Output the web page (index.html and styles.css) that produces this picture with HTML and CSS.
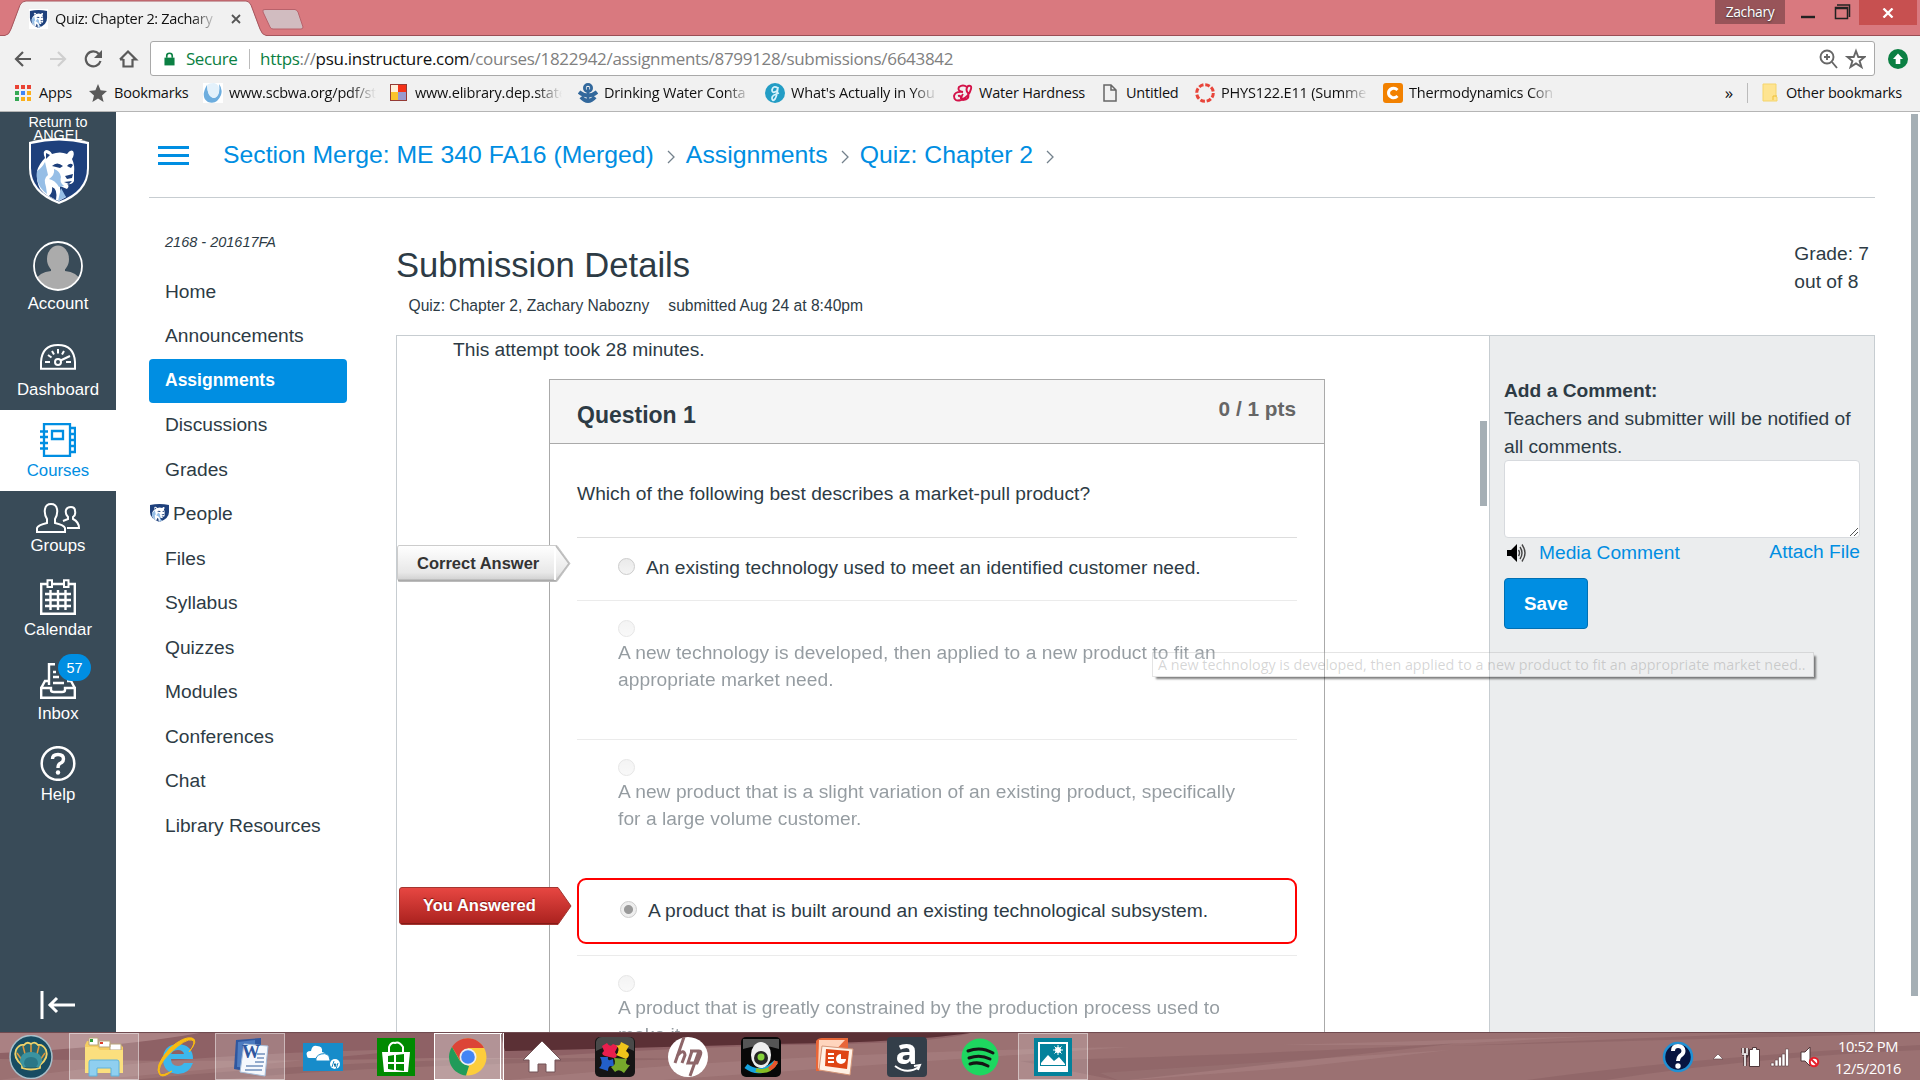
FILE: index.html
```html
<!DOCTYPE html>
<html lang="en">
<head>
<meta charset="utf-8">
<title>Quiz: Chapter 2: Zachary Nabozny</title>
<link rel="stylesheet" href="styles.css">
</head>
<body>
<svg class="defs" width="0" height="0">
  <defs>
    <symbol id="shield" viewBox="0 0 62 68" preserveAspectRatio="none">
      <path d="M1 5Q31-3 61 5V31Q61 56 31 67Q1 56 1 31Z" fill="#fff"/>
      <path d="M3 7Q31 0 59 7V31Q59 54 31 64.500Q3 54 3 31Z" fill="#1e407c"/>
      <path d="M17 21Q14 14 18 13Q22 13 24 17Q32 14 39 17Q42 12 45 14Q47 17 44 22Q47 28 46 36L46 44Q44 48 39 47Q42 49 39 52L32 49Q31 56 38 60L31 64Q18 60 12 52Q8 44 9 34Q11 27 17 21Z" fill="#fff"/>
      <path d="M9 34Q14 31 17 25L20 38Q15 41 18 50L19 57Q7 48 9 34ZM26 32Q32 34 33 40Q31 45 36 49L31 50Q27 43 21 42Q27 38 26 32ZM33 51L38 60L30 64Z" fill="#96bee6"/>
      <path d="M18 16L22 18L18 22ZM24 29Q29 24 35 29L32 31ZM39 29Q42 25 45 28L43 31ZM37 39L45 37L44 41L39 42ZM36 45L44 44L41 47ZM24 50Q30 52 28 63L21 59Q25 55 24 50Z" fill="#1e407c"/>
    </symbol>
  </defs>
</svg>
<header class="browser">
  <div class="titlebar">
    <svg class="tabs" width="310" height="36" viewBox="0 0 310 36">
      <path d="M0 36V35H7C10 34 11 30 20 5Q22 1 26 1H246Q249 1 251 5C260 30 261 34 265 35H310V36Z" fill="#f1f1f1"/>
      <path d="M0 35.500H5Q9 35 11 29L20 5Q22 1 26 1H246Q249 1 251 5L260 29Q262 35 266 35.500H310" fill="none" stroke="#a6565e"/>
      <path d="M265 9.500H295Q297 10 298 12L303 27Q303 29 301 29H273Q271 29 270 27L263 12Q262 9 265 9.500Z" fill="#d1bcc0" stroke="#b8626b"/>
    </svg>
    <div class="tab">
      <svg class="tab-icon" width="19" height="20"><rect width="19" height="20" fill="#fff"/><use href="#shield" x="0" y="0" width="19" height="20"/></svg>
      <span class="tab-title fade">Quiz: Chapter 2: Zachary</span>
      <svg class="tab-close" width="10" height="10"><path d="M1 1L9 9M9 1L1 9" stroke="#555" stroke-width="1.800"/></svg>
    </div>
    <div class="window-controls">
      <span class="profile">Zachary</span>
      <svg width="74" height="26" viewBox="0 0 74 26"><path d="M16 17H30" stroke="#222" stroke-width="2.400"/><path d="M50.500 7.500H62.500V18.500H50.500ZM50 8.500H63M52 5H64.500V17" fill="none" stroke="#222" stroke-width="1.500"/></svg>
      <span class="close"><svg width="12" height="10"><path d="M1.500 .5L10.500 9.500M10.500 .5L1.500 9.500" stroke="#fff" stroke-width="2.300"/></svg></span>
    </div>
  </div>
  <div class="toolbar">
    <svg class="tool-icons" width="150" height="36" viewBox="0 0 150 36" fill="none" stroke="#5a5a5a" stroke-width="2.200">
      <path d="M31 18H16M23 11L16 18L23 25"/>
      <path d="M50 18H65M58 11L65 18L58 25" stroke="#cfcfcf"/>
      <path d="M99 13A7.500 7.500 0 1 0 100.500 20"/><path d="M102 9V17H94Z" fill="#5a5a5a" stroke="none"/>
      <path d="M123.500 18V25.500H132.500V18M120 18.500L128 10.500L136 18.500H132.500M123.500 18.500H120"/>
    </svg>
    <div class="address">
      <svg width="11" height="14" viewBox="0 0 12 15"><path d="M.5 6H11.500V14.500H.5Z" fill="#0b8043"/><path d="M3 6V4Q3 1.200 6 1.200T9 4V6" fill="none" stroke="#0b8043" stroke-width="1.800"/></svg>
      <span class="secure">Secure</span><span class="sep"></span>
      <span class="url"><span class="green">https</span>://<b>psu.instructure.com</b>/courses/1822942/assignments/8799128/submissions/6643842</span>
      <svg class="address-actions" width="47" height="22" viewBox="0 0 47 22" fill="none" stroke="#666" stroke-width="1.900"><circle cx="8" cy="9" r="6.500"/><path d="M13 14L18 20M5 9H11M8 6V12"/><path d="M37 3L39.300 9H45.500L40.600 13L42.500 19L37 15.500L31.500 19L33.400 13L28.500 9H34.700Z"/></svg>
    </div>
    <svg class="update" width="20" height="20"><circle cx="10" cy="10" r="10" fill="#0b8043"/><path d="M10 4.500L15 10H12.300V15H7.700V10H5Z" fill="#fff"/></svg>
  </div>
  <div class="bookmarks">
    <div class="bm"><i class="apps-grid"></i><span>Apps</span></div>
    <div class="bm"><svg width="20" height="20" viewBox="0 0 20 20"><path d="M10 1L12.600 7.300L19 8L14 12.500L15.600 19L10 15.500L4.400 19L6 12.500L1 8L7.400 7.300Z" fill="#5a5a5a"/></svg><span>Bookmarks</span></div>
    <div class="bm"><svg width="20" height="20"><rect width="20" height="20" fill="#fff"/><path d="M4 2Q-3 14 5 19Q14 22 18 12Q20 6 16 1Q18 12 11 15Q5 15 4 2Z" fill="#6dadde"/><path d="M4 2Q6 0 11 0Q17 1 16 9Q15 15 10 15Q4 13 4 2Z" fill="#e3f1fb"/></svg><span class="fade">www.scbwa.org/pdf/st</span></div>
    <div class="bm"><svg width="20" height="20"><rect x="1" y="1" width="17" height="17" fill="#943b35"/><rect x="2" y="2" width="7" height="7" fill="#fff0db"/><rect x="9" y="2" width="8" height="7" fill="#f53218"/><rect x="2" y="9" width="7" height="8" fill="#fbc42b"/><rect x="9" y="9" width="8" height="8" fill="#9999ce"/></svg><span class="fade">www.elibrary.dep.state</span></div>
    <div class="bm"><svg width="20" height="20" fill="none" stroke="#32689c"><circle cx="10" cy="5" r="3.600" stroke-width="2.800"/><path d="M1 9Q10 16 19 9M3 14Q10 22 17 14" stroke-width="4"/><path d="M10 4V19" stroke-width="2.500"/></svg><span class="fade">Drinking Water Conta</span></div>
    <div class="bm"><svg width="20" height="20"><circle cx="10" cy="10" r="10" fill="#239dc5"/><path d="M13 5Q8 2 7 7Q7 11 12 8L13 4Q12 13 10 16Q7 19 7 15Q7 12 14 10" fill="none" stroke="#d6f2fb" stroke-width="1.800"/></svg><span class="fade">What's Actually in You</span></div>
    <div class="bm"><svg width="20" height="20" fill="none" stroke="#d31349" stroke-width="1.900"><path d="M14 4Q10 1 6 4Q4 8 10 9Q2 8 1 13Q1 19 8 17Q16 14 18 6Q19 2 15 3Q12 7 15 10Q17 17 10 17Q7 15 10 11M5 13Q8 12 8 16"/></svg><span>Water Hardness</span></div>
    <div class="bm"><svg width="20" height="20" fill="none" stroke="#666" stroke-width="1.500"><path d="M4 2H11L16 7V18H4ZM11 2V7H16"/></svg><span>Untitled</span></div>
    <div class="bm"><svg width="20" height="20"><circle cx="10" cy="10" r="8.300" fill="none" stroke="#e8453a" stroke-width="3" stroke-dasharray="4.700 1.820"/></svg><span class="fade">PHYS122.E11 (Summe</span></div>
    <div class="bm"><svg width="20" height="20"><rect width="20" height="20" rx="3" fill="#f28100"/><path d="M14.500 7Q12 4.500 9 5.500Q5.500 7 5.500 10T9 14.500Q12 15.500 14.500 13" fill="none" stroke="#fff" stroke-width="3"/></svg><span class="fade">Thermodynamics Con</span></div>
    <div class="bm-end"><span class="more">»</span><span class="sep"></span><svg width="16" height="19"><path d="M1 1H14V14H15V18H1Z" fill="#fee491" stroke="#f5d56d"/><path d="M11 17V13H15" fill="none" stroke="#eebf38"/></svg><span>Other bookmarks</span></div>
  </div>
</header>

<div class="page">
  <nav class="global-nav">
    <div class="logo"><span>Return to<br>ANGEL</span><svg width="62" height="68"><use href="#shield" width="62" height="68"/></svg></div>
    <a class="nav-account"><svg width="50" height="50"><defs><clipPath id="av"><circle cx="25" cy="25" r="23.500"/></clipPath></defs><g clip-path="url(#av)" fill="#ababab"><ellipse cx="25" cy="18" rx="11" ry="13.500"/><path d="M18 27H32V30Q44 31 48 40V50H2V40Q6 31 18 30Z"/></g><circle cx="25" cy="25" r="24" fill="none" stroke="#fff" stroke-width="1.800"/></svg><span>Account</span></a>
    <a class="nav-dashboard"><svg width="36" height="26" fill="none" stroke="#fff" stroke-width="2"><path d="M1 24.800V18Q2 1 18 1T35 18V24.800Z"/><circle cx="18" cy="18" r="3"/><path d="M20.500 16.500L30 12M5 18H10M26 18H31M8 11L11.500 13.500M12 7L14 10.500M18 5V9.500M24 7L22 10.500"/></svg><span>Dashboard</span></a>
    <a class="nav-courses"><svg width="36" height="34" fill="none" stroke="#008ee2" stroke-width="2.300"><path d="M4 1.200H30V32.800H4ZM12 8H23V16H12ZM30 5H35V29H30M30 11H35M30 17H35M30 23H35"/><path d="M0 8.500H8M0 14H8M0 20H8M0 25.500H8"/></svg><span>Courses</span></a>
    <a class="nav-groups"><svg width="44" height="30" fill="none" stroke="#fff" stroke-width="2"><path d="M1 29V25Q2 22 11 20V16Q8 11 9 6Q10 1 15 1T21 6Q22 11 19 16V20Q28 22 29 25V29Z"/><path d="M27 18L32 16V14Q29 11 30 7Q31 4 35 4T39 8Q40 12 37 14V16Q43 19 43 25H31"/></svg><span>Groups</span></a>
    <a class="nav-calendar"><svg width="36" height="36" fill="none" stroke="#fff"><path d="M7 5H1.200V34.800H34.800V5H29M13 5H23" stroke-width="2.400"/><path d="M7.500 1.200H12V8H7.500ZM24 1.200H28.500V8H24Z" stroke-width="2"/><path d="M10.500 11V31M18 11V31M25.500 11V31M5 15H31M5 21H31M5 27H31" stroke-width="2.400"/></svg><span>Calendar</span></a>
    <a class="nav-inbox"><svg width="36" height="36" fill="none" stroke="#fff" stroke-width="2.400"><path d="M1.200 25H11V27Q11 29 14 29H22Q25 29 25 27V25H34.800V34.800H1.200ZM1.200 25L5 18H9M34.800 25L31 18H27M9 22V1.200H15M13 9H16M13 14H19M13 20H24"/></svg><b class="badge">57</b><span>Inbox</span></a>
    <a class="nav-help"><svg width="36" height="35" fill="none" stroke="#fff"><circle cx="18" cy="17.500" r="16.300" stroke-width="2.500"/><path d="M12.500 13Q12.500 8.500 18 8.500T23.500 13Q23.500 16 20 17.500Q18 18.500 18 22" stroke-width="3.400"/><circle cx="18" cy="26.500" r="2.200" fill="#fff" stroke="none"/></svg><span>Help</span></a>
    <svg class="collapse" width="36" height="28" fill="none" stroke="#fff" stroke-width="3"><path d="M2 0V28M9 14H35M17 7L10 14L17 21"/></svg>
  </nav>

  <div class="content">
    <div class="crumbs">
      <i class="burger"></i>
      <a>Section Merge: ME 340 FA16 (Merged)</a><svg class="chev" width="9" height="14"><path d="M1 1L7 7L1 13"/></svg>
      <a>Assignments</a><svg class="chev" width="9" height="14"><path d="M1 1L7 7L1 13"/></svg>
      <a>Quiz: Chapter 2</a><svg class="chev" width="9" height="14"><path d="M1 1L7 7L1 13"/></svg>
    </div>
    <div class="columns">
      <nav class="course-nav">
        <em>2168 - 201617FA</em>
        <a>Home</a><a>Announcements</a><a class="active">Assignments</a><a>Discussions</a><a>Grades</a>
        <a class="people"><svg width="21" height="20"><use href="#shield" width="21" height="20"/></svg>People</a>
        <a>Files</a><a>Syllabus</a><a>Quizzes</a><a>Modules</a><a>Conferences</a><a>Chat</a><a>Library Resources</a>
      </nav>
      <main>
        <div class="heading">
          <div><h1>Submission Details</h1><p><span>Quiz: Chapter 2, Zachary Nabozny</span><span class="when">submitted Aug 24 at 8:40pm</span></p></div>
          <div class="grade">Grade: 7<br>out of 8</div>
        </div>
        <div class="frame">
          <div class="attempt">
            <p class="took">This attempt took 28 minutes.</p>
            <i class="thumb"></i>
            <section class="question">
              <header><h2>Question 1</h2><span>0 / 1 pts</span></header>
              <p class="prompt">Which of the following best describes a market-pull product?</p>
              <div class="answer short"><i class="radio"></i><span>An existing technology used to meet an identified customer need.</span>
                <div class="flag right"><svg width="174" height="37"><defs><linearGradient id="g1" x2="0" y2="1"><stop stop-color="#fff"/><stop offset=".75" stop-color="#e8e8e8"/><stop offset="1" stop-color="#ccc"/></linearGradient></defs><path d="M2 .5H160L173 18.500L160 36.500H3Q.5 36 .5 33V3Q.5 .5 2 .5Z" fill="url(#g1)" stroke="#ccc"/><path d="M1 35.500H159" stroke="#aaa" stroke-width="2"/><path d="M158 1V35" stroke="#fff" stroke-width="2"/><path d="M159 1L172 18.500L159 36" fill="none" stroke="#bbb" stroke-width="1.500"/></svg><b>Correct Answer</b></div>
              </div>
              <div class="answer long faded"><i class="radio"></i><p>A new technology is developed, then applied to a new product to fit an<br>appropriate market need.</p></div>
              <div class="answer long faded"><i class="radio"></i><p>A new product that is a slight variation of an existing product, specifically<br>for a large volume customer.</p></div>
              <div class="answer chosen"><i class="radio on"></i><span>A product that is built around an existing technological subsystem.</span>
                <div class="flag wrong"><svg width="173" height="38"><defs><linearGradient id="g2" x2="0" y2="1"><stop stop-color="#e84742"/><stop offset="1" stop-color="#a9211e"/></linearGradient></defs><path d="M3 .5H159L172 19L159 37.500H3Q.5 37 .5 35V3Q.5 .5 3 .5Z" fill="url(#g2)" stroke="#a33631"/><path d="M2 36.500H159" stroke="#861b17"/></svg><b>You Answered</b></div>
              </div>
              <div class="answer long last faded"><i class="radio"></i><p>A product that is greatly constrained by the production process used to<br>make it.</p></div>
            </section>
          </div>
          <aside>
            <b>Add a Comment:</b>
            <p>Teachers and submitter will be notified of<br>all comments.</p>
            <div class="textarea"><svg width="10" height="10"><path d="M1 9L9 1M5 9L9 5" stroke="#555"/></svg></div>
            <div class="media"><svg width="22" height="20" fill="none" stroke="#444"><path d="M1 7H5L11 1V19L5 13H1Z" fill="#000" stroke="none"/><path d="M12.500 7Q14.500 10 12.500 13M14 4Q18 10 14 16M16 1.500Q22 10 16 18.500" stroke-width="1.400"/></svg><a>Media Comment</a><a class="attach">Attach File</a></div>
            <div class="save">Save</div>
          </aside>
        </div>
      </main>
    </div>
  </div>
  <i class="page-thumb"></i>
  <div class="tooltip">A new technology is developed, then applied to a new product to fit an appropriate market need..</div>
</div>

<footer class="taskbar">
  <svg class="wood" width="1920" height="48" viewBox="0 0 1920 48" preserveAspectRatio="none"><path d="M0 0H970Q940 10 790 12Q660 15 520 25H430Q250 30 0 26Z" fill="#8e6165"/><path d="M500 0H970Q900 10 770 11Q640 15 505 18Z" fill="#5b3035"/><path d="M0 0H200Q120 14 0 20Z" fill="#b78f90" opacity=".7"/><path d="M0 47Q180 20 420 16Q300 28 80 48ZM500 48Q760 20 1130 14Q900 30 650 48ZM1100 40L1450 17L1300 34L1120 48ZM1280 12L1600 3L1430 12Z" fill="#b38b8b" opacity=".35"/><path d="M120 48Q400 20 700 26Q350 32 210 48ZM1020 28Q1300 20 1460 10L1120 48ZM1520 48Q1680 25 1920 12V17Q1740 25 1600 48ZM1450 13L1770 0H1920Z" fill="#784e53" opacity=".28"/></svg>
  <div class="apps">
    <span><svg width="44" height="44"><ellipse cx="22" cy="22" rx="21" ry="21.500" fill="#174c62" stroke="#a8bfc9" stroke-width="1.500"/><path d="M13 33V30Q4 23 7 15Q10 9 15 10Q18 6 22 9Q26 6 29 10Q34 9 37 15Q40 23 31 30V33Q22 36 13 33Z" fill="#28656f" stroke="#f0d36a" stroke-width="1.800"/><path d="M18 27L14 11M26 27L30 11M15 28L8 18M29 28L36 18M22 26V10" stroke="#df963c" stroke-width="1.500"/><path d="M11 27Q11 17 22 17T33 27L30 32H14Z" fill="#3b93a0"/><path d="M15 29Q15 22 22 22T29 29L27 32H17Z" fill="#2a7787"/></svg></span>
    <span class="open"><svg width="42" height="40"><path d="M4 4H12L15 7H37L40 10V36H2V8Z" fill="#f5cd61"/><path d="M6 1H15V8H6ZM16 4H27V10H16ZM27 7H38V13H27Z" fill="#fff" stroke="#b9a57a"/><path d="M7 2H10V5H7Z" fill="#319d39"/><path d="M17 5H20V7H17Z" fill="#df3d2a"/><path d="M2 10H14L17 13H40V36H2Z" fill="#fbdf7e"/><path d="M6 39V25Q6 23 8 23H34Q36 23 36 25V39H28V31H14V39Z" fill="#8fcff0" stroke="#5eb2dc"/></svg></span>
    <span><svg width="40" height="40" fill="none"><path d="M34 22H14Q14 29 21 29Q25 29 27 26H36Q32 37 21 37Q6 36 6 22T21 7Q36 8 36 22ZM14 17H27Q26 13 21 13T14 17Z" fill="#3cb7ed" fill-rule="evenodd"/><path d="M3 37Q-1 30 13 16Q29 1 35 3Q40 5 32 15Q42 3 35 1Q27-1 13 11Q-4 30 3 38Q7 41 15 34Q6 39 3 37Z" fill="#f9bb13" stroke="#f9bb13"/></svg></span>
    <span class="open"><svg width="40" height="40"><path d="M6 3L31 1V37L4 32Z" fill="#2f579f"/><path d="M8 5L25 3V31L7 30Z" fill="#4e7cc0"/><path d="M14 7L38 9L35 39L10 35Z" fill="#f5f8fd" stroke="#a6bdd9"/><path d="M27 17H35M27 21H34M25 25H34M16 29H33M15 33H32" stroke="#7290bc" stroke-width="1.700"/></svg><b class="word-w">W</b></span>
    <span><svg width="40" height="28"><rect width="40" height="28" fill="#178cca"/><path d="M4 13Q2 8 8 8Q9 2 14 3Q20 3 19 9Q24 10 23 15H6Q4 15 4 13Z" fill="#fff"/><path d="M18 11Q26 9 27 17V18H13Q12 13 18 11" fill="#fff" stroke="#178cca"/><circle cx="32" cy="21" r="5" fill="#fff"/><path d="M31 18L29 24M31 21H33L32 24M35 20L33 26" stroke="#178cca"/></svg></span>
    <span><svg width="38" height="38"><rect width="38" height="38" fill="#008a00"/><path d="M5 14H33L31 34H7Z" fill="#fff"/><path d="M12 14V9Q14 4 18 5Q22 3 26 9V14" fill="none" stroke="#fff" stroke-width="2"/><path d="M11 18L17 17V24H11ZM19 17L27 16V24H19ZM11 26H17V32L11 31ZM19 26H27V33L19 32Z" fill="#008a00"/></svg></span>
    <span class="open current"><svg width="38" height="38"><circle cx="19" cy="19" r="18.500" fill="#fccd3c"/><path d="M3 9A18.500 18.500 0 0 1 35 10H19L12 24Z" fill="#dc4437"/><path d="M3 9L11 23L20 28L17 37.500A18.500 18.500 0 0 1 3 9" fill="#219b59"/><circle cx="19" cy="19" r="8.500" fill="#eee"/><circle cx="19" cy="19" r="6.800" fill="#4385f4"/></svg></span>
    <span><svg width="40" height="36"><path d="M20 2L39 21H33V33H24V25H16V33H7V21H1Z" fill="#fff" stroke="#725356"/></svg></span>
    <span><svg width="40" height="40"><rect width="40" height="40" rx="5" fill="#151515"/><path d="M1 5Q2 0 7 0H33Q39 0 39 5V14Q20 4 1 14Z" fill="#494949"/><path d="M7 9L12 6Q15 11 18 7L23 9L20 15Q24 20 19 21L10 19Q5 17 9 14Z" fill="#e91e4d"/><path d="M21 8Q25 10 26 5L34 9L31 14Q37 18 31 22L21 18Q26 13 21 8Z" fill="#f0c51a"/><path d="M5 20H13Q12 25 18 22L19 30Q13 27 13 34L4 31Q9 27 5 20Z" fill="#235fca"/><path d="M19 21L32 22Q29 28 35 28L29 36Q24 31 20 35L16 30Q22 28 19 21Z" fill="#76a92b"/></svg></span>
    <span><svg width="40" height="40"><circle cx="20" cy="20" r="20" fill="#fff"/><path d="M16 0L7 26M9 19Q16 11 17 18L14 26M31 14L22 39M22 14H31Q34 14 32 19L29 26H20L24 14" fill="none" stroke="#8e6669" stroke-width="3"/></svg></span>
    <span><svg width="40" height="40"><rect width="40" height="40" rx="5" fill="#080808"/><path d="M2 2H38V12Q20 6 2 12Z" fill="#555"/><path d="M5 29Q19 40 35 25" fill="none" stroke="#16a3df" stroke-width="5"/><path d="M15 33Q28 37 35 25" fill="none" stroke="#86bd24" stroke-width="4"/><path d="M28 32Q34 29 35 24" fill="none" stroke="#e8532c" stroke-width="4"/><ellipse cx="20" cy="18" rx="10" ry="13" fill="#eee"/><circle cx="20" cy="21" r="7" fill="#252525"/><circle cx="20" cy="20" r="3.500" fill="#86d33b"/></svg></span>
    <span><svg width="40" height="40"><path d="M2 4Q4 1 8 1H34V34H2Z" fill="#e86638"/><path d="M5 3H31L4 32Z" fill="#ffd5bd"/><path d="M8 9L39 12L36 38L5 33Z" fill="#fff0e4" stroke="#d39578"/><path d="M12 12L35 14L33 32L11 29Z" fill="#df4514"/><path d="M14 17H20M14 21H20M14 25H20" stroke="#fff" stroke-width="2"/><circle cx="27" cy="22" r="5" fill="#fff"/><path d="M27 22V16Q33 17 33 22Z" fill="#df4514"/></svg></span>
    <span class="amazon"><svg width="40" height="40"><rect width="40" height="40" rx="4" fill="#333e49"/><path d="M8 29Q20 38 32 30M27 29L33 28L31 33" fill="none" stroke="#fff" stroke-width="2"/></svg><b>a</b></span>
    <span><svg width="38" height="38"><circle cx="19" cy="19" r="18.500" fill="#1ed760"/><path d="M7 13Q20 8 32 15M8 20Q19 16 29 21M9 26Q18 23 27 28" fill="none" stroke="#151515" stroke-width="3" stroke-linecap="round"/></svg></span>
    <span class="open"><svg width="38" height="38"><rect width="38" height="38" fill="#03819b"/><path d="M5 5H33V32H5Z" fill="none" stroke="#fff" stroke-width="2"/><path d="M7 25L14 17L20 23L25 19L31 26V27H7ZM4 28H34V34H4Z" fill="#fff"/><circle cx="24" cy="12" r="3" fill="#fff"/><path d="M24 7V17M19 12H29M20.500 8.500L27.500 15.500M27.500 8.500L20.500 15.500" stroke="#fff"/></svg></span>
  </div>
  <div class="tray">
    <svg width="170" height="40" viewBox="0 0 170 40"><circle cx="16" cy="20" r="14" fill="#071440" stroke="#2190d3" stroke-width="2.500"/><path d="M11 14Q11 9 16 9T21.500 14Q21.500 17 18 19Q16 21 16 24" fill="none" stroke="#fff" stroke-width="4"/><circle cx="16" cy="29" r="2.700" fill="#fff"/><path d="M51 22L56 17L61 22Z" fill="#fff" stroke="#67484b" stroke-width=".7"/><g stroke="#51383b" stroke-width="3.500" fill="none"><path d="M81 11V16M85 11V16M80 17H86L83 21V29"/></g><g stroke="#fff" stroke-width="1.600" fill="none"><path d="M81 11V16M85 11V16M80 17H86M83 17V29"/></g><path d="M87.500 12.500H90.500V10.500H94.500V12.500H97.500V29.500H87.500Z" fill="#fff" stroke="#51383b"/><path d="M109 29V26H112V29ZM113 29V23H116V29ZM116.500 29V20H119.500V29ZM120 29V17H123V29ZM123.500 29V12H126.500V29Z" fill="#fff" stroke="#604347" stroke-width=".6"/><path d="M139 15H143L148 10V29L143 24H139Z" fill="#fff" stroke="#51383b"/><circle cx="152" cy="25" r="4.200" fill="#fff" stroke="#e4202b" stroke-width="2"/><path d="M149 22L155 28" stroke="#e4202b" stroke-width="2"/></svg>
    <div class="clock">10:52 PM<br>12/5/2016</div>
  </div>
</footer>
</body>
</html>
```
FILE: styles.css
```css
* { box-sizing: border-box; }
html, body { margin: 0; height: 100%; overflow: hidden; }
body {
  display: flex; flex-direction: column; width: 1920px; height: 1080px;
  background: #fff; color: #2d3b45; font: 19.200px "Liberation Sans", Arial, sans-serif; white-space: nowrap;
}
svg { display: block; flex: none; }
p, h1, h2 { margin: 0; }
i { flex: none; }
.defs { position: absolute; }

/* Browser chrome */
.browser { height: 112px; flex: none; background: #f1f1f1; border-bottom: 1px solid #b5b5b5; font-family: "Open Sans", sans-serif; color: #111; }
.titlebar { height: 36px; display: flex; background: #d9797f; border-bottom: 1px solid #9a4e55; position: relative; }
.tabs { position: absolute; left: 0; top: 0; }
.tab { position: relative; display: flex; align-items: center; width: 260px; padding: 2px 0 0 29px; font-size: 14.500px; }
.tab-title { margin-left: 7px; width: 163px; letter-spacing: -.34px; }
.tab-close { margin-left: 13px; }
.fade { -webkit-mask-image: linear-gradient(to right, #000 calc(100% - 26px), transparent); mask-image: linear-gradient(to right, #000 calc(100% - 26px), transparent); }
.window-controls { margin-left: auto; display: flex; align-items: flex-start; padding-right: 3px; }
.profile { width: 70px; height: 24px; line-height: 23px; text-align: center; background: #985459; color: #fff; font-size: 13.800px; letter-spacing: -.3px; text-shadow: 0 1px 2px #333; }
.close { width: 58px; height: 25px; background: #c75050; display: flex; align-items: center; justify-content: center; }
.toolbar { height: 39px; display: flex; align-items: flex-start; padding-top: 5px; }
.address { width: 1725px; height: 35px; border: 1px solid #a9a9a9; border-radius: 3px; background: #fff; display: flex; align-items: center; padding-left: 13px; font-size: 17px; }
.secure { color: #0b8043; margin-left: 11px; width: 52px; letter-spacing: -.45px; }
.sep { width: 1px; height: 20px; background: #bbb; }
.address .sep { margin: 0 10px 0 11px; }
.url { color: #808080; letter-spacing: -.3px; }
.url b { font-weight: 400; color: #111; }
.green { color: #0b8043; }
.address-actions { margin-left: auto; margin-right: 8px; }
.update { margin: 8px 0 0 13px; }
.bookmarks { height: 35px; display: grid; grid-template-columns: 75px 115px 186px 189px 187px 188px 147px 95px 188px 200px 1fr; padding-left: 13px; font-size: 14.500px; letter-spacing: -.2px; }
.bm { display: flex; align-items: center; min-width: 0; }
.bm > span { margin-left: 6px; }
.bm .fade { width: 147px; }
.apps-grid { width: 20px; height: 16px; }
.apps-grid::before { content: ""; display: block; width: 4px; height: 4px; margin-left: 2px; background: #ea4335; box-shadow: 6px 0 #ea4335, 12px 0 #ea4335, 0 6px #34a853, 6px 6px #4285f4, 12px 6px #fbaf1a, 0 12px #34a853, 6px 12px #fbaf1a, 12px 12px #fbaf1a; }
.bm-end { display: flex; align-items: center; justify-content: flex-end; padding-right: 18px; }
.bm-end .sep { margin: 0 14px; }
.bm-end svg { margin-right: 8px; }
.more { font-size: 17px; }

/* Page shell */
.page { position: relative; flex: 1; min-height: 0; display: flex; overflow: hidden; }
.global-nav { width: 116px; flex: none; background: #394b58; color: #fff; display: flex; flex-direction: column; font-size: 16.800px; text-align: center; }
.global-nav a { display: flex; flex-direction: column; align-items: center; line-height: 22px; position: relative; }
.logo { height: 120px; padding-top: 4px; font-size: 14.400px; line-height: 13px; display: flex; flex-direction: column; align-items: center; }
.logo svg { margin: -5px 0 0 1px; }
.nav-account { height: 92px; padding-top: 9px; gap: 2px; }
.nav-dashboard { height: 86px; padding-top: 20px; gap: 9px; }
.global-nav .nav-courses { height: 81px; padding-top: 13px; gap: 3px; background: #fff; color: #008ee2; }
.nav-groups { height: 75px; padding-top: 12px; gap: 2px; }
.nav-calendar { height: 84px; padding-top: 13px; gap: 4px; }
.nav-inbox { height: 84px; padding-top: 13px; gap: 4px; }
.nav-help { padding-top: 12px; gap: 3px; }
.badge { position: absolute; left: 58px; top: 4px; width: 33px; height: 27px; border-radius: 14px; background: #008ee2; font-size: 14.400px; line-height: 28px; font-weight: 400; }
.collapse { margin: auto auto 13px; }
.content { width: 1759px; padding: 0 0 0 33px; display: flex; flex-direction: column; }
.crumbs { height: 86px; flex: none; border-bottom: 1px solid #c7cdd1; display: flex; align-items: center; font-size: 24.780px; padding-left: 9px; }
.crumbs a { color: #008ee2; }
.crumbs .burger + a { margin-left: 34px; }
.burger { width: 31px; height: 19px; margin-top: 2px; border: solid #008ee2; border-width: 3px 0; background: linear-gradient(transparent 5px, #008ee2 5px 8px, transparent 8px); }
.chev { margin: 4px 10px 0 13px; fill: none; stroke: #73818c; stroke-width: 1.300; }
.columns { display: flex; flex: 1; min-height: 0; }
.course-nav { width: 247px; flex: none; padding-top: 35px; display: flex; flex-direction: column; }
.course-nav em { font-size: 14.500px; line-height: 18px; padding-left: 16px; margin-bottom: 18.500px; }
.course-nav a { height: 44.500px; width: 198px; padding-left: 16px; line-height: 43px; flex: none; }
.course-nav .active { background: #008ee2; color: #fff; font-weight: 700; border-radius: 4px; font-size: 17.500px; }
.course-nav .people { display: flex; align-items: center; padding: 0 0 2px 0; gap: 3px; }

/* Submission */
main { width: 1479px; display: flex; flex-direction: column; }
.heading { height: 137px; flex: none; display: flex; justify-content: space-between; }
h1 { font-size: 34.600px; font-weight: 400; line-height: 40px; padding-top: 47px; }
.heading p { font-size: 15.650px; padding: 12px 0 0 12.500px; line-height: 18px; }
.when { margin-left: 19px; }
.grade { line-height: 28px; padding: 42px 6px 0 0; }
.frame { flex: 1; min-height: 0; border: 1px solid #c7cdd1; border-bottom: 0; display: flex; }
.attempt { width: 1092px; position: relative; padding-left: 56px; overflow: hidden; }
.took { line-height: 28px; height: 43px; }
.thumb { position: absolute; right: 2px; top: 85px; width: 7px; height: 85px; background: #a5afb5; }
.question { width: 776px; height: 700px; margin-left: 96px; border: 1px solid #aaa; padding: 0 27px; }
.question header { height: 64px; margin: 0 -27px; padding: 0 28px 0 27px; background: #f5f5f5; border-bottom: 1px solid #aaa; display: flex; justify-content: space-between; color: #666; font-weight: 700; font-size: 20.800px; line-height: 58px; }
h2 { font-size: 23px; line-height: 70px; color: #2d3b45; }
.prompt { height: 93px; line-height: 100px; letter-spacing: .02px; }
.answer { position: relative; border-top: 1px solid #ddd; width: 720px; }
.answer + .answer { border-top-color: #ebebeb; }
.short { height: 63px; display: flex; align-items: center; padding: 0 0 2px 41px; gap: 11px; }
.radio { display: block; width: 17px; height: 17px; border: 1px solid #ccc; border-radius: 50%; background: linear-gradient(#eaeaea, #f4f4f4); }
.short .radio { margin-top: -4px; }
.long { height: 139px; padding: 19px 0 0 41px; line-height: 27px; letter-spacing: .05px; }
.long p { margin-top: 2px; }
.faded > * { opacity: .5; }
.answer.chosen { height: 66px; border: 2px solid #f00; border-radius: 9px; display: flex; align-items: center; padding: 0 0 1px 41px; gap: 11px; margin: 0 0 11px; }
.on { background: radial-gradient(#999 0 4px, #eee 5px); margin-top: -3px; }
.flag { position: absolute; left: -180px; top: 7px; font-size: 16.500px; line-height: 36px; color: #333; }
.flag b { position: absolute; left: 20px; top: 0; }
.flag.wrong { left: -180px; top: 7px; color: #fff; }
.wrong b { left: 24px; text-shadow: 0 -1px 1px #7a1512; }
aside { flex: 1; background: #ebedee; border-left: 1px solid #c7cdd1; padding: 41px 14px 0; line-height: 28.100px; }
.textarea { height: 78px; margin-top: -1px; background: #fff; border: 1px solid #d7dade; border-radius: 4px; display: flex; align-items: flex-end; justify-content: flex-end; }
.media { display: flex; align-items: center; height: 29px; padding-left: 2px; color: #008ee2; }
.media a { margin-left: 11px; }
.media .attach { margin: -2px 0 0 auto; }
.save { width: 84px; height: 51px; margin-top: 11px; border: 1px solid #0070b3; border-radius: 4px; background: #008ee2; color: #fff; font-weight: 700; line-height: 49px; text-align: center; font-size: 18.800px; }
.page-thumb { width: 7px; height: 882px; margin: 2px 0 0 36px; background: #a5afb5; }
.tooltip { position: absolute; left: 1152px; top: 540px; width: 662px; height: 25px; border: 1px solid rgba(120,120,120,.2); background: rgba(255,255,255,.15); box-shadow: 3px 3px 2px -1px rgba(0,0,0,.5); color: rgba(90,90,90,.25); font: 14.300px/24px "Open Sans", sans-serif; padding-left: 5px; letter-spacing: 0; }

/* Taskbar */
.taskbar { position: relative; height: 48px; flex: none; display: flex; justify-content: space-between; background: #9b7172; border-top: 1px solid #704b50; overflow: hidden; }
.wood { position: absolute; left: 0; top: 0; }
.apps { position: relative; display: flex; gap: 3px; margin-left: -4px; }
.apps span { position: relative; width: 70px; height: 47px; display: flex; align-items: center; justify-content: center; }
.apps .open { background: rgba(255,255,255,.18); border: 1px solid rgba(255,255,255,.45); }
.apps .current { background: rgba(255,255,255,.32); border: 1px solid #fff; border-right: 4px double #fff; }
.word-w { position: absolute; left: 26px; top: 8px; font: 700 18px "Liberation Serif", serif; color: #2f579f; }
.amazon b { position: absolute; left: 24px; top: -2px; color: #fff; font: 700 35px/40px "Open Sans", sans-serif; transform: scaleX(1.050); }
.tray { position: relative; display: flex; align-items: center; padding-right: 14px; color: #fff; }
.tray svg { margin-right: -2px; }
.clock { width: 76px; text-align: center; font: 14.700px/22px "Open Sans", sans-serif; letter-spacing: -.4px; }
```
